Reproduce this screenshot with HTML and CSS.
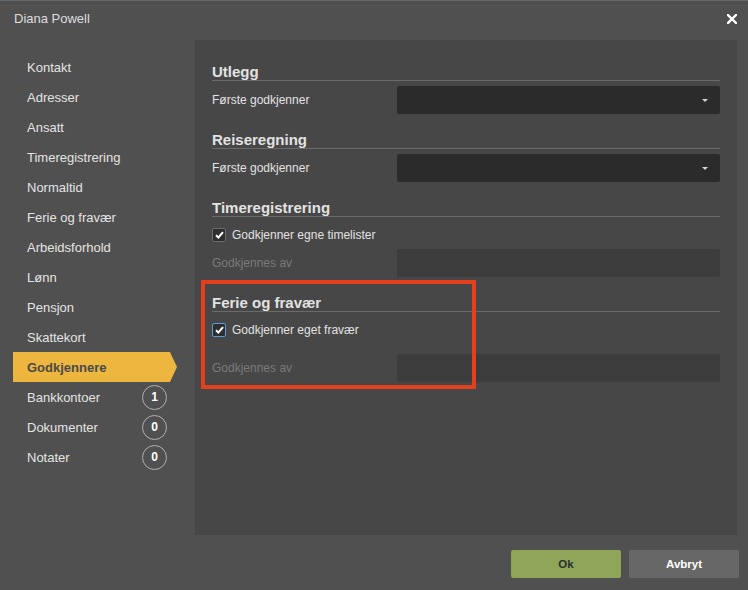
FILE: index.html
```html
<!DOCTYPE html>
<html lang="no">

<head>
   <meta charset="UTF-8">
   <meta name="viewport" content="width=device-width, initial-scale=1.0">
   <title>Diana Powell</title>
   <link rel="stylesheet" href="styles.css">
</head>

<body>
   <div class="dialog flex column">
      <header class="titlebar flex align-center justif-between">
         <span class="title">Diana Powell</span>
         <button class="close" type="button">
            <svg width="10" height="10" viewBox="0 0 10 10">
               <path d="M1 1 L9 9 M9 1 L1 9" stroke="#fff" stroke-width="2.4" stroke-linecap="square" fill="none"/>
            </svg>
         </button>
      </header>

      <div class="main flex">
         <nav class="sidebar flex column">
            <a class="nav-item">Kontakt</a>
            <a class="nav-item">Adresser</a>
            <a class="nav-item">Ansatt</a>
            <a class="nav-item">Timeregistrering</a>
            <a class="nav-item">Normaltid</a>
            <a class="nav-item">Ferie og fravær</a>
            <a class="nav-item">Arbeidsforhold</a>
            <a class="nav-item">Lønn</a>
            <a class="nav-item">Pensjon</a>
            <a class="nav-item">Skattekort</a>
            <a class="nav-item active">Godkjennere</a>
            <a class="nav-item">Bankkontoer <span class="badge">1</span></a>
            <a class="nav-item">Dokumenter <span class="badge">0</span></a>
            <a class="nav-item">Notater <span class="badge">0</span></a>
         </nav>

         <section class="panel">
            <div class="group">
               <h2>Utlegg</h2>
               <div class="field flex align-center">
                  <label>Første godkjenner</label>
                  <div class="select flex align-center"><span class="caret"></span></div>
               </div>
            </div>

            <div class="group">
               <h2>Reiseregning</h2>
               <div class="field flex align-center">
                  <label>Første godkjenner</label>
                  <div class="select flex align-center"><span class="caret"></span></div>
               </div>
            </div>

            <div class="group">
               <h2>Timeregistrering</h2>
               <div class="check-row flex align-center">
                  <span class="checkbox centre">
                     <svg width="9" height="8" viewBox="0 0 9 8"><path d="M1 4.2 L3.4 6.5 L8 1.2" stroke="#fff" stroke-width="2" fill="none"/></svg>
                  </span>
                  <span>Godkjenner egne timelister</span>
               </div>
               <div class="field disabled flex align-center">
                  <label>Godkjennes av</label>
                  <div class="input"></div>
               </div>
            </div>

            <div class="group">
               <h2>Ferie og fravær</h2>
               <div class="check-row flex align-center">
                  <span class="checkbox focus centre">
                     <svg width="9" height="8" viewBox="0 0 9 8"><path d="M1 4.2 L3.4 6.5 L8 1.2" stroke="#fff" stroke-width="2" fill="none"/></svg>
                  </span>
                  <span>Godkjenner eget fravær</span>
               </div>
               <div class="field disabled spaced flex align-center">
                  <label>Godkjennes av</label>
                  <div class="input"></div>
               </div>
            </div>

            <div class="highlight"></div>
         </section>
      </div>

      <footer class="actions flex">
         <button class="btn btn-ok" type="button">Ok</button>
         <button class="btn btn-cancel" type="button">Avbryt</button>
      </footer>
   </div>
</body>

</html>
```

FILE: styles.css
```css
/** Commun */
* { padding: 0;
    margin: 0;
    box-sizing: border-box;
    font-family: "Liberation Sans", Arial, sans-serif;
}

/** Flex */
.flex { display: flex;}
.column { flex-direction: column;}
.align-center { align-items: center;}
.justif-between { justify-content: space-between;}
.centre {
    align-items: center;
    display: flex;
    justify-content: center;
}

body {
   width: 748px;
   height: 590px;
   overflow: hidden;
   background-color: #505050;
}

.dialog {
   height: 590px;
   border-top: 1px solid #676767;
}

/** Barre de titre */
.titlebar {
   height: 39px;
   padding: 0 11px 4px 14px;
   color: #dedede;
   font-size: 13px;
}
.close {
   background: none;
   border: none;
   width: 10px;
   height: 10px;
   display: flex;
   cursor: pointer;
}

.main {
   height: 495px;
}

/** Menu gauche */
.sidebar {
   width: 195px;
   padding-top: 12px;
}
.nav-item {
   position: relative;
   display: flex;
   align-items: center;
   justify-content: space-between;
   height: 30px;
   width: 157px;
   margin-left: 13px;
   padding: 0 3px 0 14px;
   color: #e4e4e4;
   font-size: 13px;
   cursor: pointer;
}
.nav-item.active {
   background-color: #ecb63f;
   color: #4a4a4a;
   font-weight: bold;
}
.nav-item.active::after {
   content: "";
   position: absolute;
   left: 100%;
   top: 0;
   border-top: 15px solid transparent;
   border-bottom: 15px solid transparent;
   border-left: 7px solid #ecb63f;
}
.badge {
   display: flex;
   align-items: center;
   justify-content: center;
   width: 25px;
   height: 25px;
   border: 1px solid #b0b0b0;
   border-radius: 50%;
   color: #fff;
   font-size: 12px;
   font-weight: bold;
}

/** Panneau */
.panel {
   position: relative;
   width: 542px;
   height: 495px;
   padding: 23px 17px 0;
   background-color: #474747;
}
.group + .group {
   margin-top: 17px;
}
h2 {
   font-size: 15px;
   line-height: 17px;
   font-weight: bold;
   color: #e2e2e2;
   border-bottom: 1px solid #6a6a6a;
}
.field {
   height: 28px;
   margin-top: 5px;
}
.field label {
   width: 185px;
   font-size: 12px;
   color: #e2e2e2;
}
.field.disabled {
   margin-top: 1px;
}
.field.disabled.spaced {
   margin-top: 11px;
}
.field.disabled label {
   color: #7a7a7a;
}
.select {
   flex: 1;
   height: 28px;
   justify-content: flex-end;
   padding-right: 12px;
   border-radius: 2px;
   background-color: #2b2b2b;
}
.caret {
   width: 0;
   height: 0;
   border-left: 3px solid transparent;
   border-right: 3px solid transparent;
   border-top: 3px solid #d2d2d2;
}
.input {
   flex: 1;
   height: 28px;
   border-radius: 2px;
   background-color: #3c3c3c;
}
.check-row {
   height: 26px;
   margin-top: 5px;
   font-size: 12px;
   color: #e2e2e2;
}
.checkbox {
   width: 14px;
   height: 14px;
   margin-right: 6px;
   border: 1px solid #6c6c6c;
   border-radius: 2px;
   background-color: #2e2e2e;
}
.checkbox.focus {
   border-color: #5a9bd5;
}

/** Cadre rouge */
.highlight {
   position: absolute;
   left: 6px;
   top: 240px;
   width: 275px;
   height: 109px;
   border: 4px solid #e2401e;
}

/** Boutons */
.actions {
   height: 55px;
   justify-content: flex-end;
   align-items: flex-start;
   gap: 8px;
   padding: 15px 9px 0 0;
}
.btn {
   width: 110px;
   height: 28px;
   border: none;
   border-radius: 2px;
   font-size: 11.5px;
   font-weight: bold;
   cursor: pointer;
}
.btn-ok {
   background-color: #8fa55a;
   color: #2f2f2f;
}
.btn-cancel {
   background-color: #676767;
   color: #fff;
}
```
